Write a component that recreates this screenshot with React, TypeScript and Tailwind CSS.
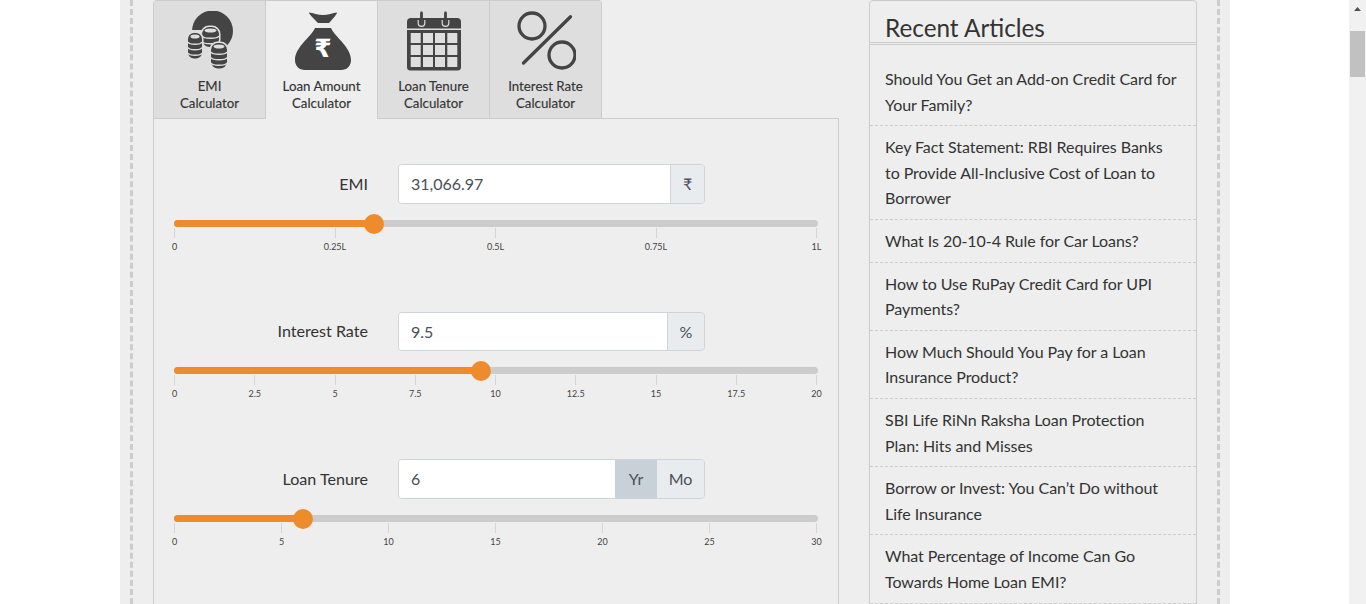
import type { ReactNode } from 'react';

const articles = [
  'Should You Get an Add-on Credit Card for Your Family?',
  'Key Fact Statement: RBI Requires Banks to Provide All-Inclusive Cost of Loan to Borrower',
  'What Is 20-10-4 Rule for Car Loans?',
  'How to Use RuPay Credit Card for UPI Payments?',
  'How Much Should You Pay for a Loan Insurance Product?',
  'SBI Life RiNn Raksha Loan Protection Plan: Hits and Misses',
  'Borrow or Invest: You Can’t Do without Life Insurance',
  'What Percentage of Income Can Go Towards Home Loan EMI?',
];

function Stack({ x, y, w, tiers }: { x: number; y: number; w: number; tiers: number }) {
  const rx = w / 2;
  const cx = x + rx;
  const bands = [];
  for (let i = 1; i <= tiers; i++) {
    const by = y + 3.5 + i * 5.5;
    bands.push(<path key={i} d={`M${x} ${by}c1.500 3 ${w - 1.500} 3 ${w} 0`} fill="none" stroke="#dedede" strokeWidth="1.400" />);
  }
  const h = 7 + tiers * 5.5 + 2;
  return (
    <g>
      <rect x={x - 1.500} y={y - 1.500} width={w + 3} height={h + 3} rx={rx} fill="#dedede" />
      <rect x={x} y={y} width={w} height={h} rx={rx - 1} fill="#444" />
      <ellipse cx={cx} cy={y + 3.500} rx={rx - 2.500} ry="2" fill="#dedede" />
      {bands}
    </g>
  );
}

function CoinsIcon() {
  return (
    <svg width="60" height="60" viewBox="1 0 60 60">
      <circle cx="33.500" cy="20" r="20.500" fill="#444" />
      <path d="M0 19h23v41H0zM23 34h10v26H23z" fill="#dedede" />
      <Stack x={23} y={16} w={17} tiers={2} />
      <Stack x={9} y={22} w={14} tiers={3} />
      <Stack x={32} y={32} w={16} tiers={3} />
    </svg>
  );
}

function BagIcon() {
  return (
    <svg width="60" height="60" viewBox="-3 0 60 60">
      <path d="M14 1.500c4 .5 9 2.500 14 2.500s10-2 14-2.500c0 2-5 7-8 10.500H23c-3-3.500-9-8.500-9-10.500z" fill="#444" />
      <path d="M20 17h16c4 9 20 19 20 32 0 6-4 10-10 10H10C4 59 0 55 0 49c0-13 16-23 20-32z" fill="#444" />
      <text x="28" y="46" textAnchor="middle" fill="#fff" className="font-['DejaVu_Sans',sans-serif]" fontSize="25" fontWeight="700">₹</text>
    </svg>
  );
}

function CalendarIcon() {
  const xs = [3.700, 16, 28, 40.300];
  const ys = [22, 34, 46];
  return (
    <svg width="54" height="60" viewBox="0 0 54 60">
      <path d="M4 7h46a4 4 0 0 1 4 4v6.500H0V11a4 4 0 0 1 4-4z" fill="#444" />
      <path d="M0 19h54v37a3.500 3.500 0 0 1-3.500 3.500h-47A3.500 3.500 0 0 1 0 56z" fill="#444" />
      {xs.map((x) => ys.map((y) => <rect key={`${x}-${y}`} x={x} y={y} width="10" height="10" fill="#dedede" />))}
      <path d="M11.200 9v3a3.300 3.300 0 0 0 6.600 0V9M35.200 9v3a3.300 3.300 0 0 0 6.600 0V9" fill="none" stroke="#dedede" strokeWidth="1.200" />
      <path d="M14.500 2v10.500M38.500 2v10.500" stroke="#444" strokeWidth="2.800" strokeLinecap="round" />
    </svg>
  );
}

function PercentIcon() {
  return (
    <svg width="60" height="60" viewBox="0 0 60 60">
      <circle cx="16" cy="15" r="13" fill="none" stroke="#444" strokeWidth="3.300" />
      <circle cx="46" cy="44" r="13" fill="none" stroke="#444" strokeWidth="3.300" />
      <path d="M7.500 52L54.500 5.700" stroke="#444" strokeWidth="3.300" strokeLinecap="round" />
    </svg>
  );
}

function Tab({ icon, lines, active }: { icon: ReactNode; lines: string[]; active?: boolean }) {
  return (
    <div className={`w-[112px] h-[119px] flex flex-col items-center border-t border-r border-[#ccc] text-[13.300px] leading-[17px] text-[#333] [-webkit-text-stroke:0.15px_#333] ${active ? 'bg-[#eee] border-b-0' : 'bg-[#dedede] border-b'}`}>
      <div className="h-[76px] pt-[10px] mb-[1px] flex justify-center">{icon}</div>
      {lines.map((l) => <div key={l}>{l}</div>)}
    </div>
  );
}

function Slider({ pct, ticks }: { pct: number; ticks: string[] }) {
  return (
    <div className="mx-[20px] mt-[16px] relative">
      <div className="h-[7px] rounded bg-[#ccc]">
        <div className="h-[7px] rounded bg-[#ee8c2d]" style={{ width: `${pct}%` }} />
      </div>
      <div className="absolute top-[-6.500px] w-[20px] h-[20px] -ml-[10px] rounded-full bg-[#ee8c2d]" style={{ left: `${pct}%` }} />
      <div className="flex justify-between mt-[1px] mr-[1px]">
        {ticks.map((t) => (
          <div key={t} className="w-px relative flex flex-col items-center">
            <div className="w-px h-[10px] bg-[#d5d5d5]" />
            <div className="text-[9px] leading-[12px] mt-[3px] text-[#444] whitespace-nowrap">{t}</div>
          </div>
        ))}
      </div>
    </div>
  );
}

function Field({ label, value, children, className }: { label: string; value: string; children: ReactNode; className: string }) {
  return (
    <div className={`flex items-center ${className}`}>
      <div className="w-[214px] text-right text-[16.100px] text-[#333]">{label}</div>
      <div className="ml-[30px] w-[307px] h-full flex rounded border border-[#ced4da] overflow-hidden">
        <div className="flex-1 bg-white px-[12px] text-[16px] leading-[38px] text-[#495057]">{value}</div>
        {children}
      </div>
    </div>
  );
}

export default function App() {
  return (
    <div className="flex h-[604px] overflow-hidden bg-white font-['Lato',sans-serif]">
      <div className="flex-1 min-w-0">
        <div className="ml-[120px] w-[1110px] h-[604px] bg-[#eee] px-[10px]">
          <div className="h-full border-x-[3px] border-dashed border-[#ccc] flex pl-[20px]">
            <div className="w-[686px] shrink-0">
              <div className="relative z-10 flex h-[119px] rounded-t border-l border-[#ccc] w-[449px] overflow-hidden">
                <Tab icon={<CoinsIcon />} lines={['EMI', 'Calculator']} />
                <Tab icon={<BagIcon />} lines={['Loan Amount', 'Calculator']} active />
                <Tab icon={<CalendarIcon />} lines={['Loan Tenure', 'Calculator']} />
                <Tab icon={<PercentIcon />} lines={['Interest Rate', 'Calculator']} />
              </div>
              <div className="h-[486px] -mt-px border-x border-t border-[#ccc] pt-[45px]">
                <Field label="EMI" value="31,066.97" className="h-[40px]">
                  <div className="w-[34px] bg-[#e9ecef] border-l border-[#ced4da] text-center text-[16px] leading-[38px] text-[#495057]">₹</div>
                </Field>
                <Slider pct={31.1} ticks={['0', '0.25L', '0.5L', '0.75L', '1L']} />
                <Field label="Interest Rate" value="9.5" className="h-[39px] mt-[59px]">
                  <div className="w-[37px] bg-[#e9ecef] border-l border-[#ced4da] text-center text-[16px] leading-[38px] text-[#495057]">%</div>
                </Field>
                <Slider pct={47.6} ticks={['0', '2.5', '5', '7.5', '10', '12.5', '15', '17.5', '20']} />
                <Field label="Loan Tenure" value="6" className="h-[40px] mt-[59px]">
                  <div className="w-[42px] bg-[#c8d0d8] text-center text-[16px] leading-[38px] text-[#495057]">Yr</div>
                  <div className="w-[47px] bg-[#e9ecef] text-center text-[16px] leading-[38px] text-[#495057]">Mo</div>
                </Field>
                <Slider pct={20} ticks={['0', '5', '10', '15', '20', '25', '30']} />
              </div>
            </div>
            <div className="ml-[30px] w-[328px] shrink-0 h-[640px] border border-[#ccc] rounded">
              <h3 className="px-[15px] pt-[13px] text-[24.300px] leading-[27px] h-[41px] text-[#333]">Recent Articles</h3>
              <div className="border-y border-[#ccc] h-[3px]" />
              <ul className="mt-[13px]">
                {articles.map((a) => (
                  <li key={a} className="px-[15px] py-[8px] border-b border-dashed border-[#ccc] text-[16px] leading-[25.600px] tracking-[-0.05px] text-[#333]">{a}</li>
                ))}
              </ul>
            </div>
          </div>
        </div>
      </div>
      <div className="w-[17px] shrink-0 bg-[#f1f1f1] flex flex-col items-center">
        <svg width="17" height="17" viewBox="0 0 17 17" className="shrink-0"><path d="M8.500 7L12 11H5z" fill="#505050" /></svg>
        <div className="w-[15px] h-[46px] mt-[14px] bg-[#c1c1c1]" />
      </div>
    </div>
  );
}
